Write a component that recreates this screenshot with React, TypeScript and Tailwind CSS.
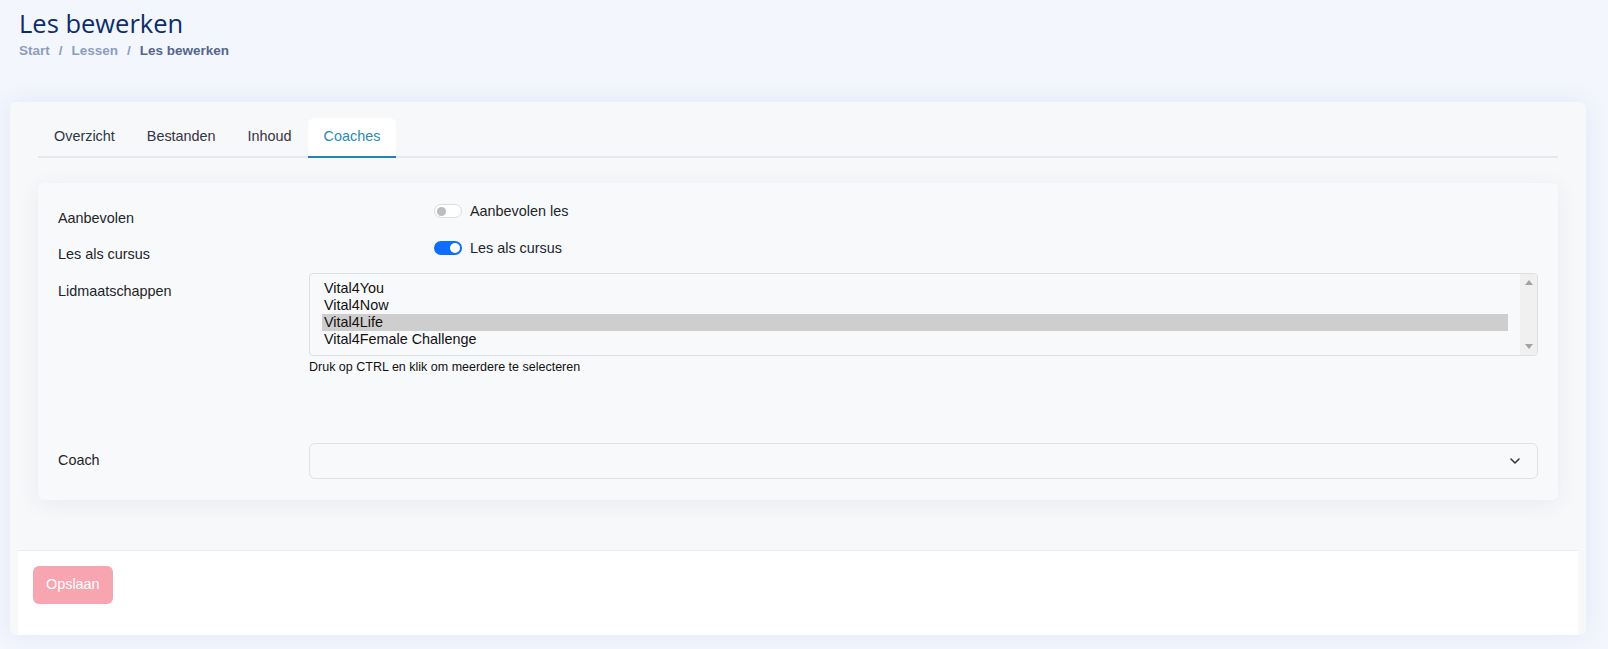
import React from "react";
import { ChevronDown } from "lucide-react";

const memberships = ["Vital4You", "Vital4Now", "Vital4Life", "Vital4Female Challenge"];
const tabs = ["Overzicht", "Bestanden", "Inhoud", "Coaches"];

function Switch({ on }: { on: boolean }) {
  return (
    <span
      className={
        on
          ? "flex items-center justify-end w-[28px] h-[14px] rounded-full bg-[#0d6efd] pr-[2px]"
          : "flex items-center w-[28px] h-[14px] rounded-full bg-white border border-[#d9dce1] pl-[2px]"
      }
    >
      <span className={on ? "w-[10px] h-[10px] rounded-full bg-white" : "w-[9px] h-[9px] rounded-full bg-[#bdbdbd]"} />
    </span>
  );
}

export default function App() {
  return (
    <div
      className="min-h-screen bg-[#f3f6fd] pt-[8px] pb-[14px]"
      style={{ fontFamily: '"Liberation Sans", Arial, sans-serif' }}
    >
      {/* Page header */}
      <header className="px-[19px]">
        <h1
          className="text-[25.5px] leading-[30px] font-medium text-[#0c2d6b]"
          style={{ fontFamily: '"Open Sans", sans-serif' }}
        >
          Les bewerken
        </h1>
        <nav className="mt-[5px] flex gap-[9px] text-[13.5px] leading-[16px] font-bold text-[#8e9dbd]">
          <span>Start</span>
          <span>/</span>
          <span>Lessen</span>
          <span>/</span>
          <span className="text-[#56668a]">Les bewerken</span>
        </nav>
      </header>

      {/* Main card */}
      <div className="ml-[10px] mr-[22px] mt-[43px] rounded-md bg-[#f7f8fa] shadow-[0_0_24px_rgba(40,70,150,0.08)]">
        <div className="px-[28px] pt-[16px] pb-[50px]">
          <div className="flex h-[40px] border-b-2 border-[#e5e8ef]">
            {tabs.map((t) => (
              <div
                key={t}
                className={
                  t === "Coaches"
                    ? "flex items-center px-4 -mb-[2px] h-[40px] bg-white rounded-t-md border-b-2 border-[#1f86b3] text-[14.4px] text-[#2a8bb7]"
                    : "flex items-center px-4 text-[14.4px] text-[#2f3545]"
                }
              >
                {t}
              </div>
            ))}
          </div>

          {/* Form panel */}
          <div className="mt-[25px] rounded-md bg-[#f8f9fb] shadow-[0_4px_22px_rgba(30,50,100,0.07)] px-[20px] pt-[20px] pb-[21px] text-[14.4px] text-[#212529]">
            <div className="flex h-[37px]">
              <div className="w-[251px] mt-[5px] leading-[20px]">Aanbevolen</div>
              <div className="ml-[125px] flex items-center h-[16px] gap-[8px] leading-[20px]">
                <Switch on={false} />
                <span>Aanbevolen les</span>
              </div>
            </div>
            <div className="flex h-[33px]">
              <div className="w-[251px] mt-[4px] leading-[20px]">Les als cursus</div>
              <div className="ml-[125px] flex items-center h-[16px] gap-[8px] leading-[20px]">
                <Switch on={true} />
                <span>Les als cursus</span>
              </div>
            </div>
            <div className="flex">
              <div className="w-[251px] shrink-0 mt-[8px] leading-[20px]">Lidmaatschappen</div>
              <div className="flex-1">
                <div className="flex h-[83px] rounded-[4px] border border-[#dcdfe4] overflow-hidden">
                  <div className="flex-1 pl-[12px] pr-[12px] pt-[6px] leading-[17px] text-[#111]">
                    {memberships.map((m) => (
                      <div key={m} className={m === "Vital4Life" ? "bg-[#cecece] pl-[2px]" : "pl-[2px]"}>
                        {m}
                      </div>
                    ))}
                  </div>
                  <div className="w-[17px] bg-[#f0f0f0] flex flex-col items-center justify-between py-[6px]">
                    <svg width="8" height="5" viewBox="0 0 8 5">
                      <path d="M4 0 L8 5 L0 5 Z" fill="#a3a3a3" />
                    </svg>
                    <svg width="8" height="5" viewBox="0 0 8 5">
                      <path d="M0 0 L8 0 L4 5 Z" fill="#a3a3a3" />
                    </svg>
                  </div>
                </div>
                <p className="mt-[3px] text-[12.5px] leading-[16px] text-[#111]">
                  Druk op CTRL en klik om meerdere te selecteren
                </p>
              </div>
            </div>
            <div className="flex items-center mt-[68px]">
              <div className="w-[251px] shrink-0">Coach</div>
              <div className="flex-1 h-[36px] rounded-md border border-[#dee1e6] flex items-center justify-end pr-[14px]">
                <ChevronDown size={16} strokeWidth={2.4} className="text-[#343a40]" />
              </div>
            </div>
          </div>
        </div>

        {/* Footer with actions */}
        <div className="mx-[8px] h-[85px] border-t border-[#e9ecf2] bg-white px-[15px] pt-[15px]">
          <button className="h-[38px] px-[13px] rounded-md bg-[#f8a5b2] text-white text-[14.4px]">Opslaan</button>
        </div>
      </div>
    </div>
  );
}
